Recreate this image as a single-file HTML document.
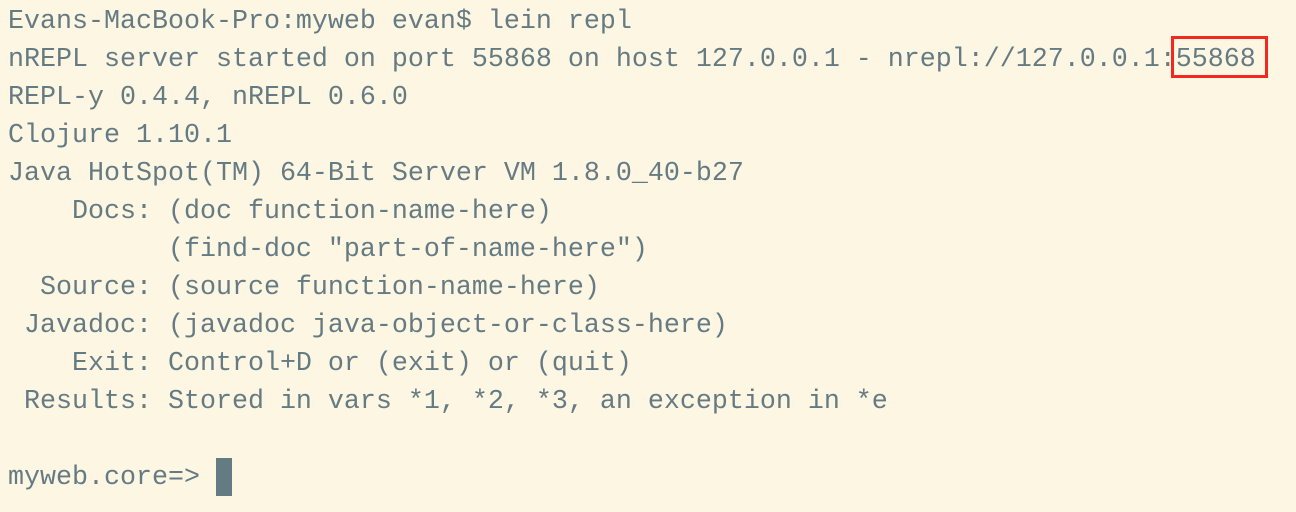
<!DOCTYPE html>
<html><head><style>
html,body{margin:0;padding:0;background:#fdf6e3;width:1296px;height:512px;overflow:hidden}
pre{margin:0;position:absolute;left:8px;top:3px;font-family:"Liberation Mono",monospace;font-size:26.67px;line-height:38px;color:#657b83}
.box{position:absolute;left:1171px;top:36px;width:91px;height:36px;border:3px solid #f2291f}
.cur{position:absolute;left:216px;top:458px;width:16px;height:38px;background:#657b83}
</style></head><body>
<pre>Evans-MacBook-Pro:myweb evan$ lein repl
nREPL server started on port 55868 on host 127.0.0.1 - nrepl://127.0.0.1:55868
REPL-y 0.4.4, nREPL 0.6.0
Clojure 1.10.1
Java HotSpot(TM) 64-Bit Server VM 1.8.0_40-b27
    Docs: (doc function-name-here)
          (find-doc "part-of-name-here")
  Source: (source function-name-here)
 Javadoc: (javadoc java-object-or-class-here)
    Exit: Control+D or (exit) or (quit)
 Results: Stored in vars *1, *2, *3, an exception in *e

myweb.core=&gt; </pre>
<div class="box"></div>
<div class="cur"></div>
</body></html>
